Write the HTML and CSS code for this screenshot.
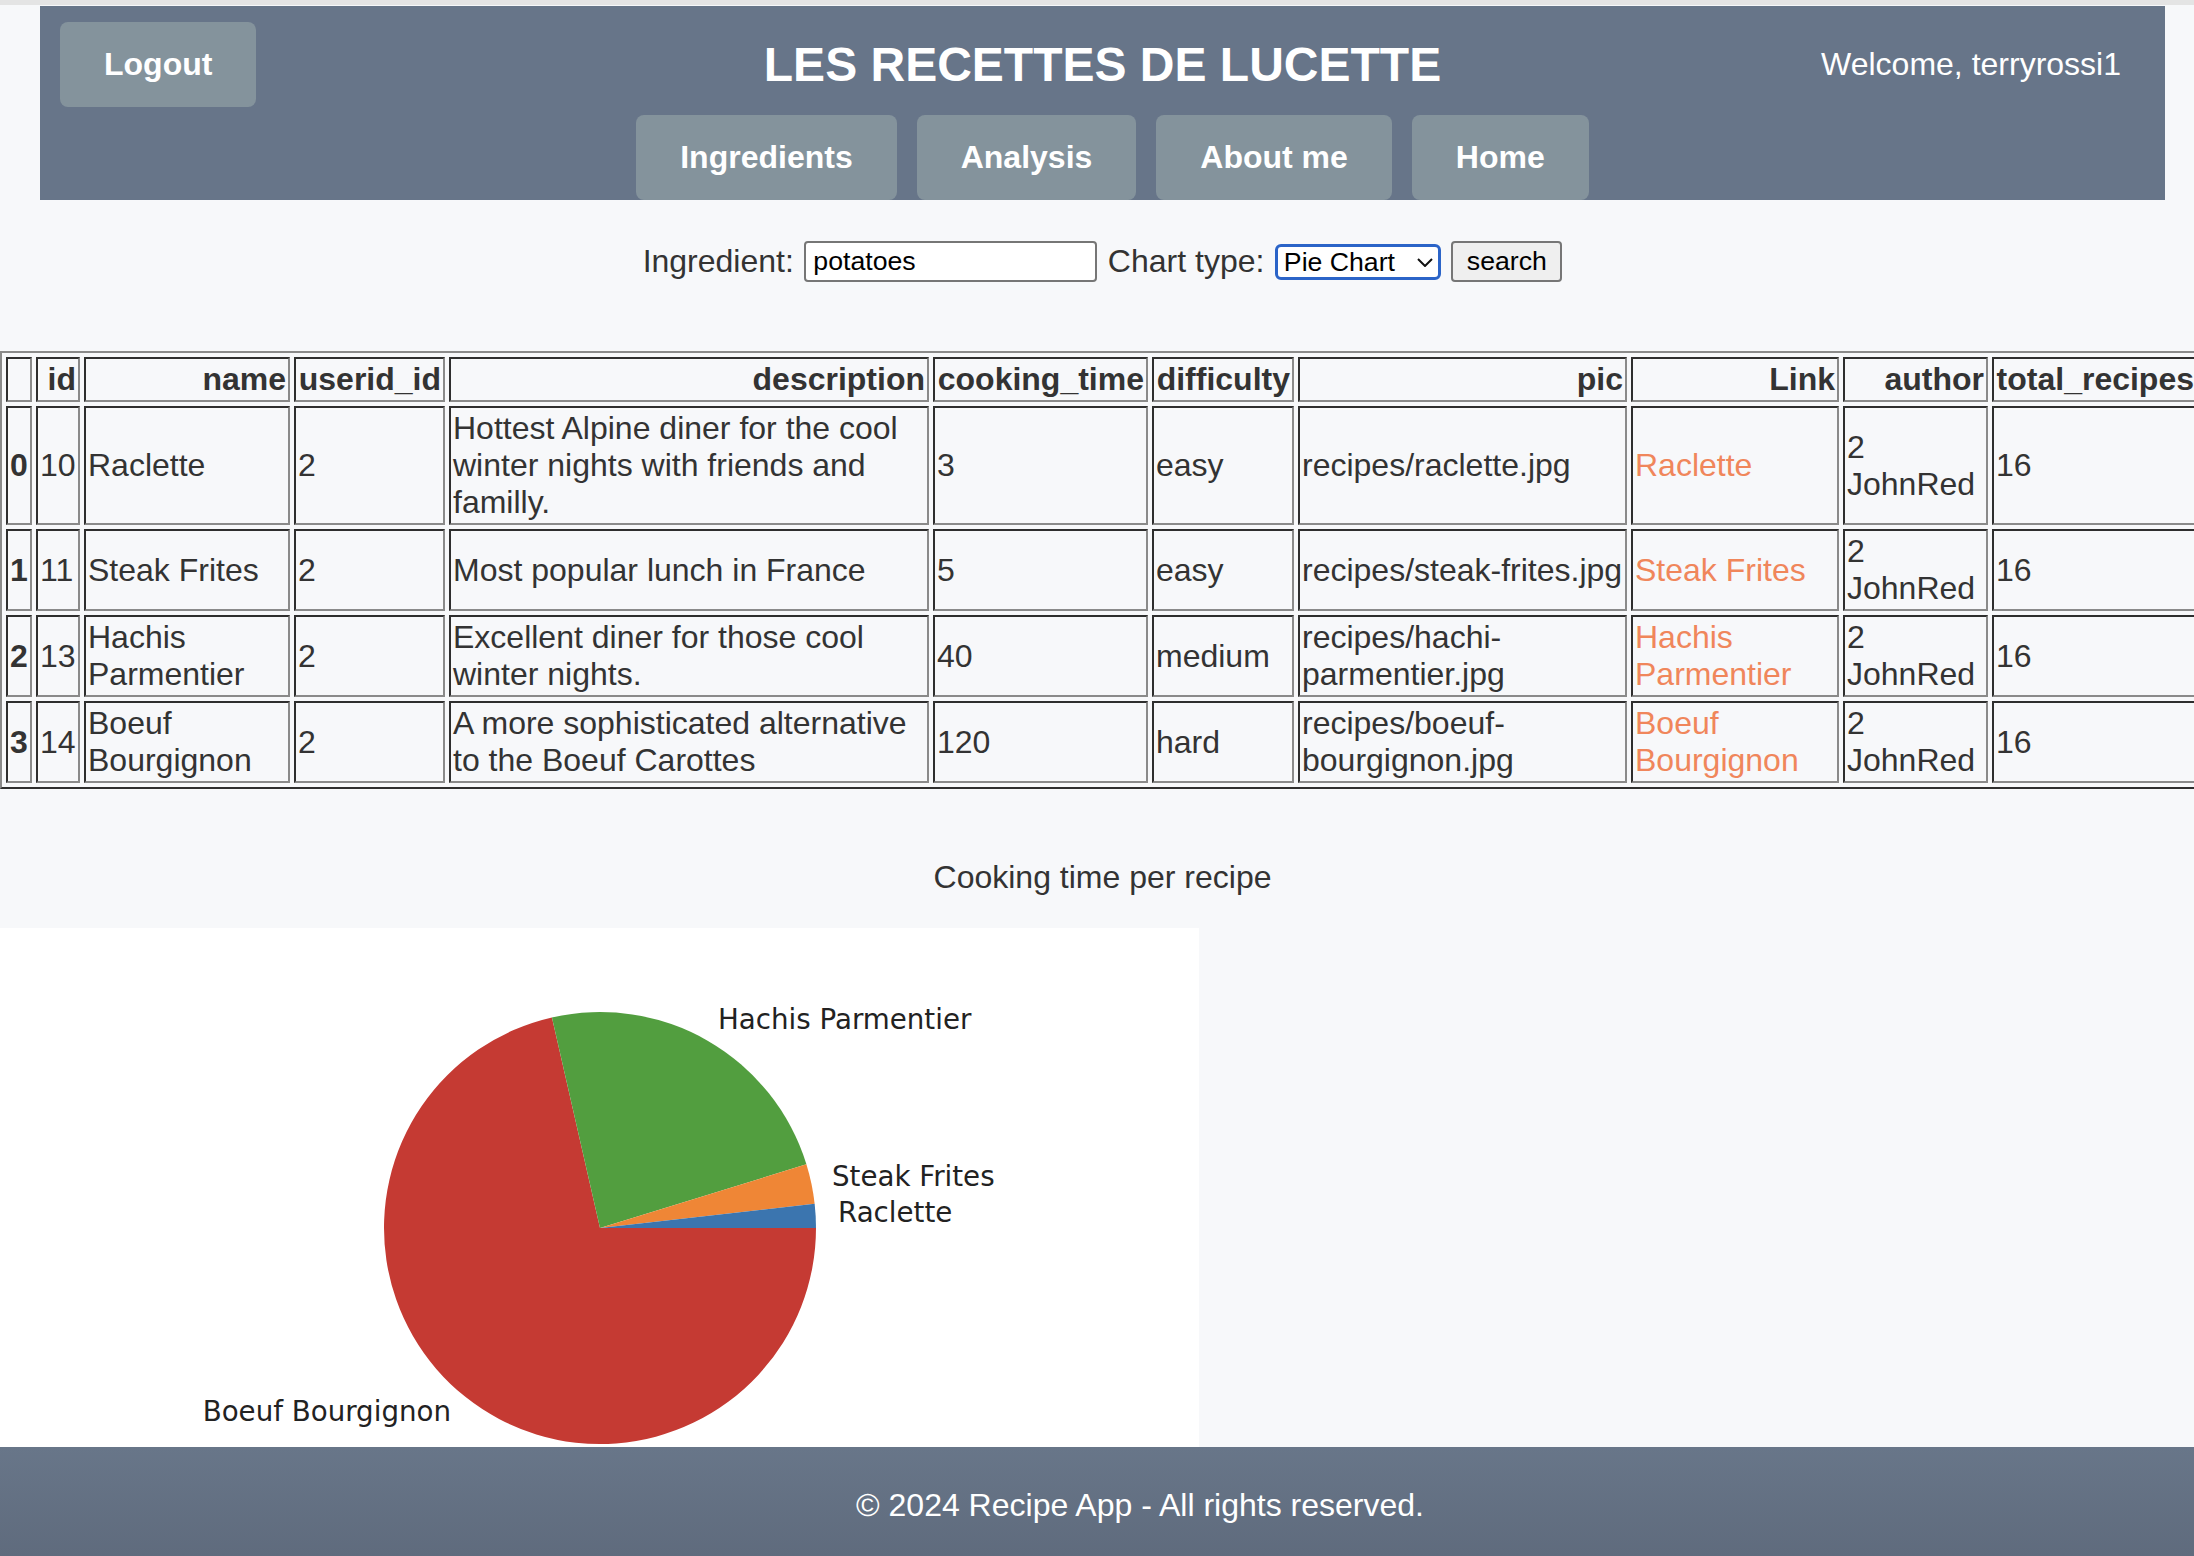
FILE: index.html
```html
<!DOCTYPE html>
<html lang="fr">
<head>
<meta charset="utf-8">
<title>Les Recettes de Lucette</title>
<link rel="stylesheet" href="styles.css">
</head>
<body>
<div class="topline"></div>
<header class="site-header">
  <div class="header-row">
    <div class="header-left"><a class="btn" href="#">Logout</a></div>
    <h1 class="site-title">LES RECETTES DE LUCETTE</h1>
    <div class="header-right"><span class="welcome">Welcome, terryrossi1</span></div>
  </div>
  <nav class="main-nav">
    <a class="btn" href="#">Ingredients</a>
    <a class="btn" href="#">Analysis</a>
    <a class="btn" href="#">About me</a>
    <a class="btn" href="#">Home</a>
  </nav>
</header>

<form class="search-form">
  <label class="form-label" for="ing">Ingredient:</label>
  <input class="text-input" id="ing" type="text" value="potatoes">
  <label class="form-label" for="ct">Chart type:</label>
  <span class="select-wrap">
    <select class="chart-select" id="ct"><option>Pie Chart</option><option>Bar Chart</option><option>Line Chart</option></select>
    <svg class="chev" viewBox="0 0 16 9" width="16" height="9"><path d="M1 1 L8 8 L15 1" fill="none" stroke="#111" stroke-width="2"/></svg>
  </span>
  <button class="search-btn" type="button">search</button>
</form>

<div class="table-wrap">
<table class="dataframe">
  <thead>
    <tr class="head-row">
      <th class="c-idx"></th>
      <th class="c-id">id</th>
      <th class="c-name">name</th>
      <th class="c-uid">userid_id</th>
      <th class="c-desc">description</th>
      <th class="c-time">cooking_time</th>
      <th class="c-diff">difficulty</th>
      <th class="c-pic">pic</th>
      <th class="c-link">Link</th>
      <th class="c-author">author</th>
      <th class="c-total">total_recipes</th>
    </tr>
  </thead>
  <tbody>
    <tr>
      <th>0</th><td>10</td><td>Raclette</td><td>2</td>
      <td>Hottest Alpine diner for the cool winter nights with friends and familly.</td>
      <td>3</td><td>easy</td><td>recipes/raclette.jpg</td>
      <td><a href="#">Raclette</a></td><td>2 JohnRed</td><td>16</td>
    </tr>
    <tr>
      <th>1</th><td>11</td><td>Steak Frites</td><td>2</td>
      <td>Most popular lunch in France</td>
      <td>5</td><td>easy</td><td>recipes/steak-frites.jpg</td>
      <td><a href="#">Steak Frites</a></td><td>2 JohnRed</td><td>16</td>
    </tr>
    <tr>
      <th>2</th><td>13</td><td>Hachis Parmentier</td><td>2</td>
      <td>Excellent diner for those cool winter nights.</td>
      <td>40</td><td>medium</td><td>recipes/hachi-parmentier.jpg</td>
      <td><a href="#">Hachis Parmentier</a></td><td>2 JohnRed</td><td>16</td>
    </tr>
    <tr>
      <th>3</th><td>14</td><td>Boeuf Bourgignon</td><td>2</td>
      <td>A more sophisticated alternative to the Boeuf Carottes</td>
      <td>120</td><td>hard</td><td>recipes/boeuf-bourgignon.jpg</td>
      <td><a href="#">Boeuf Bourgignon</a></td><td>2 JohnRed</td><td>16</td>
    </tr>
  </tbody>
</table>
</div>

<p class="chart-title">Cooking time per recipe</p>
<div class="chart">
  <svg class="chart-svg" width="1199" height="519" viewBox="0 0 1199 519">
    <path d="M600,300 L551.94,89.41 A216,216 0 1 0 816,300 Z" fill="#c53a33"/>
    <path d="M600,300 L806.40,236.33 A216,216 0 0 0 551.94,89.41 Z" fill="#529e3f"/>
    <path d="M600,300 L814.64,275.82 A216,216 0 0 0 806.40,236.33 Z" fill="#ef8636"/>
    <path d="M600,300 L816,300 A216,216 0 0 0 814.64,275.82 Z" fill="#3b75af"/>
    <text class="pie-label" x="718" y="91">Hachis Parmentier</text>
    <text class="pie-label" x="832" y="248">Steak Frites</text>
    <text class="pie-label" x="838" y="284">Raclette</text>
    <text class="pie-label end" x="451" y="483">Boeuf Bourgignon</text>
  </svg>
</div>

<footer class="site-footer">
  <p class="footer-text">© 2024 Recipe App - All rights reserved.</p>
</footer>
</body>
</html>
```

FILE: styles.css
```css
* { box-sizing: border-box; }

html, body {
  margin: 0;
  padding: 0;
}

body {
  background: #f7f8fa;
  font-family: "Liberation Sans", Arial, Helvetica, sans-serif;
  color: #333;
  overflow: hidden;
}

.topline {
  height: 5px;
  background: #e4e4e4;
}

/* ---------- header ---------- */
.site-header {
  margin: 1px 29px 0 40px;
  background: #677589;
  padding: 16px 20px 0;
}

.header-row {
  display: grid;
  grid-template-columns: 1fr auto 1fr;
  align-items: center;
}

.btn {
  display: inline-block;
  background: #84939c;
  color: #fff;
  font-weight: bold;
  font-size: 32px;
  line-height: 37px;
  padding: 24px 44px;
  border-radius: 8px;
  text-decoration: none;
}

.site-title {
  margin: 0;
  font-size: 48px;
  line-height: 55px;
  font-weight: bold;
  color: #fff;
}

.header-right {
  justify-self: end;
  padding-right: 24px;
}

.welcome {
  font-size: 32px;
  line-height: 37px;
  color: #fff;
}

.main-nav {
  margin-top: 8px;
  display: flex;
  justify-content: center;
}

.main-nav .btn {
  margin-left: 20px;
}

/* ---------- search form ---------- */
.search-form {
  margin: 41px 29px 0 40px;
  display: flex;
  justify-content: center;
  align-items: center;
  gap: 10.5px;
}

.form-label {
  font-size: 32px;
  line-height: 37px;
  color: #333;
}

.text-input {
  width: 293px;
  height: 41px;
  border: 2px solid #767676;
  border-radius: 4px;
  background: #fff;
  color: #000;
  font-family: "Liberation Sans", Arial, sans-serif;
  font-size: 26.67px;
  padding: 0 7px;
  outline: none;
}

.select-wrap {
  position: relative;
  display: inline-block;
  width: 166px;
  height: 36px;
}

.chart-select {
  appearance: none;
  -webkit-appearance: none;
  width: 100%;
  height: 100%;
  border: 3px solid #2b64c8;
  border-radius: 6px;
  background: #fff;
  color: #000;
  font-family: "Liberation Sans", Arial, sans-serif;
  font-size: 26.67px;
  padding: 0 0 0 6px;
  outline: none;
}

.chev {
  position: absolute;
  left: 142px;
  top: 14px;
  pointer-events: none;
}

.search-btn {
  width: 111px;
  height: 41px;
  background: #efefef;
  border: 2px solid #767676;
  border-radius: 4px;
  color: #000;
  font-family: "Liberation Sans", Arial, sans-serif;
  font-size: 26.67px;
  padding: 0;
}

/* ---------- table ---------- */
.table-wrap {
  margin-top: 69px;
  overflow: hidden;
}

.dataframe {
  table-layout: fixed;
  width: 2204px;
  border-collapse: separate;
  border-spacing: 4px;
  border: 2px solid;
  border-color: #8a8a8a #2e2e2e #2e2e2e #8a8a8a;
  font-size: 32px;
  line-height: 37px;
  color: #333;
}

.dataframe th,
.dataframe td {
  border: 2px solid;
  border-color: #2e2e2e #8a8a8a #8a8a8a #2e2e2e;
  padding: 2px;
  vertical-align: middle;
}

.dataframe td {
  text-align: left;
  font-weight: normal;
}

.head-row th {
  text-align: right;
  font-weight: bold;
}

.dataframe tbody th {
  font-weight: bold;
  text-align: left;
}

.dataframe a {
  color: #f0865b;
  text-decoration: none;
}

.c-idx { width: 26px; }
.c-id { width: 44px; }
.c-name { width: 206px; }
.c-uid { width: 151px; }
.c-desc { width: 480px; }
.c-time { width: 215px; }
.c-diff { width: 142px; }
.c-pic { width: 329px; }
.c-link { width: 208px; }
.c-author { width: 145px; }
.c-total { width: 206px; }

/* ---------- chart ---------- */
.chart-title {
  margin: 70px 29px 32px 40px;
  text-align: center;
  font-size: 32px;
  line-height: 37px;
  color: #333;
}

.chart {
  width: 1199px;
  height: 519px;
  background: #fff;
}

.chart-svg {
  display: block;
}

.pie-label {
  font-family: "DejaVu Sans", sans-serif;
  font-size: 27.7px;
  fill: #222;
  dominant-baseline: central;
}

.pie-label.end {
  text-anchor: end;
}

/* ---------- footer ---------- */
.site-footer {
  height: 109px;
  background: linear-gradient(#687689, #5f6b7d);
  padding: 40px 0 0 86px;
  text-align: center;
}

.footer-text {
  margin: 0;
  font-size: 32px;
  line-height: 37px;
  color: #fff;
}
```
